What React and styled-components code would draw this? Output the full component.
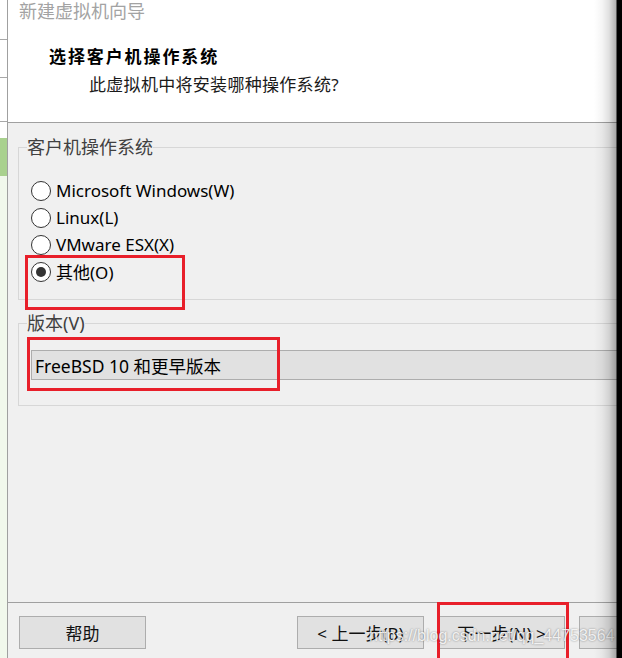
import React from "react";
import styled, { createGlobalStyle } from "styled-components";

const Global = createGlobalStyle`
  html, body { margin: 0; padding: 0; background: #fff; }
  body { font-family: "Noto Sans", "Noto Sans CJK SC", sans-serif; }
  * { box-sizing: border-box; }
`;

const Screen = styled.div`
  position: relative;
  width: 622px;
  height: 658px;
  overflow: hidden;
  display: flex;
  background: #f0f0f0;
`;

const Strip = styled.div`
  width: 8px;
  flex: none;
  display: flex;
  flex-direction: column;
  border-right: 1px solid #a0a0a0;
`;

const StripBlock = styled.div`
  height: ${(p) => (p.$h ? `${p.$h}px` : "auto")};
  flex: ${(p) => (p.$h ? "none" : "1")};
  background: ${(p) => p.$bg};
  border-bottom: ${(p) => (p.$line ? "1px solid #a8a8a8" : "none")};
`;

const Dialog = styled.div`
  flex: 1;
  display: flex;
  flex-direction: column;
  min-width: 0;
`;

const Header = styled.div`
  height: 123px;
  flex: none;
  background: #fff;
  border-bottom: 1px solid #a0a0a0;
  display: flex;
  flex-direction: column;
`;

const Title = styled.div`
  padding-left: 11px;
  font-size: 18px;
  line-height: 22px;
  color: #a3a3a3;
`;

const Heading = styled.div`
  margin-top: 23px;
  padding-left: 41px;
  font-size: 17px;
  line-height: 24px;
  font-weight: 700;
  letter-spacing: 1.9px;
  color: #000;
`;

const Subtitle = styled.div`
  margin-top: 4px;
  padding-left: 81px;
  font-size: 17px;
  line-height: 24px;
  letter-spacing: 0.3px;
  color: #1a1a1a;
`;

const Body = styled.div`
  flex: 1;
  padding: 14px 0 0 10px;
  display: flex;
  flex-direction: column;
`;

const Group = styled.fieldset`
  margin: ${(p) => p.$mt || 0}px -40px 0 0;
  padding: 0 0 ${(p) => p.$pb}px 9px;
  border: 1px solid #d7d7d7;
  min-width: 0;
`;

const Legend = styled.legend`
  padding: 0;
  margin-left: -1px;
  font-size: 18px;
  line-height: 20px;
  color: #404040;
`;

const RadioList = styled.div`
  padding-top: 20px;
  padding-left: 3px;
  display: flex;
  flex-direction: column;
`;

const RadioRow = styled.div`
  height: 27px;
  display: flex;
  align-items: center;
  gap: 5px;
  font-size: 17px;
  color: #000;
`;

const RadioCircle = styled.span`
  width: 20px;
  height: 20px;
  border-radius: 50%;
  border: 1px solid #333;
  background: #fff;
  display: flex;
  align-items: center;
  justify-content: center;
  &::after {
    content: "";
    display: ${(p) => (p.$checked ? "block" : "none")};
    width: 10px;
    height: 10px;
    border-radius: 50%;
    background: #333;
  }
`;

const Select = styled.div`
  margin-top: 17px;
  margin-left: 3px;
  height: 30px;
  background: #e1e1e1;
  border: 1px solid #adadad;
  display: flex;
  align-items: center;
  padding-left: 3px;
  font-size: 17.5px;
  color: #000;
`;

const Footer = styled.div`
  height: 56px;
  flex: none;
  border-top: 1px solid #a0a0a0;
  padding: 13px 0 0 11px;
  display: flex;
  align-items: flex-start;
`;

const Nav = styled.div`
  margin-left: 151px;
  display: flex;
  gap: 14px;
`;

const Button = styled.div`
  width: 127px;
  height: 33px;
  flex: none;
  background: #e1e1e1;
  border: 1px solid #adadad;
  display: flex;
  align-items: center;
  justify-content: center;
  font-size: 17px;
  color: #111;
`;

const Annot = styled.div`
  position: absolute;
  border: 3px solid #e81f2a;
  pointer-events: none;
`;

const EdgeShade = styled.div`
  position: absolute;
  top: 0;
  right: 0;
  bottom: 0;
  width: 28px;
  background: linear-gradient(
    to right,
    rgba(0, 0, 0, 0) 0px,
    rgba(0, 0, 0, 0.04) 8px,
    rgba(0, 0, 0, 0.12) 15px,
    rgba(0, 0, 0, 0.3) 22px,
    #000 23px,
    #000 28px
  );
`;

const Watermark = styled.div`
  position: absolute;
  left: 369px;
  top: 626px;
  font-family: "Liberation Sans", Arial, sans-serif;
  font-size: 16px;
  line-height: 20px;
  color: rgba(255, 255, 255, 0.85);
  text-shadow: 0 0 2px rgba(0, 0, 0, 0.45);
  white-space: nowrap;
`;

const radios = [
  { label: "Microsoft Windows(W)", checked: false },
  { label: "Linux(L)", checked: false },
  { label: "VMware ESX(X)", checked: false },
  { label: "其他(O)", checked: true },
];

export default function App() {
  return (
    <>
      <Global />
      <Screen>
        <Strip>
          <StripBlock $h={40} $bg="#fff" $line />
          <StripBlock $h={38} $bg="#fff" $line />
          <StripBlock $h={44} $bg="#fff" $line />
          <StripBlock $h={16} $bg="#fff" />
          <StripBlock $h={38} $bg="#a9d18e" />
          <StripBlock $bg="#f1f8ec" />
        </Strip>
        <Dialog>
          <Header>
            <Title>新建虚拟机向导</Title>
            <Heading>选择客户机操作系统</Heading>
            <Subtitle>此虚拟机中将安装哪种操作系统?</Subtitle>
          </Header>
          <Body>
            <Group $pb={14}>
              <Legend>客户机操作系统</Legend>
              <RadioList>
                {radios.map((r) => (
                  <RadioRow key={r.label}>
                    <RadioCircle $checked={r.checked} />
                    {r.label}
                  </RadioRow>
                ))}
              </RadioList>
            </Group>
            <Group $mt={13} $pb={25}>
              <Legend>版本(V)</Legend>
              <Select>FreeBSD 10 和更早版本</Select>
            </Group>
          </Body>
          <Footer>
            <Button>帮助</Button>
            <Nav>
              <Button>&lt; 上一步(B)</Button>
              <Button>下一步(N) &gt;</Button>
              <Button>取消</Button>
            </Nav>
          </Footer>
        </Dialog>
        <Annot style={{ left: 25, top: 255, width: 160, height: 55 }} />
        <Annot style={{ left: 27, top: 337, width: 253, height: 54 }} />
        <Annot style={{ left: 437, top: 602, width: 132, height: 60 }} />
        <Watermark>https://blog.csdn.net/qq_44753564</Watermark>
        <EdgeShade />
      </Screen>
    </>
  );
}
